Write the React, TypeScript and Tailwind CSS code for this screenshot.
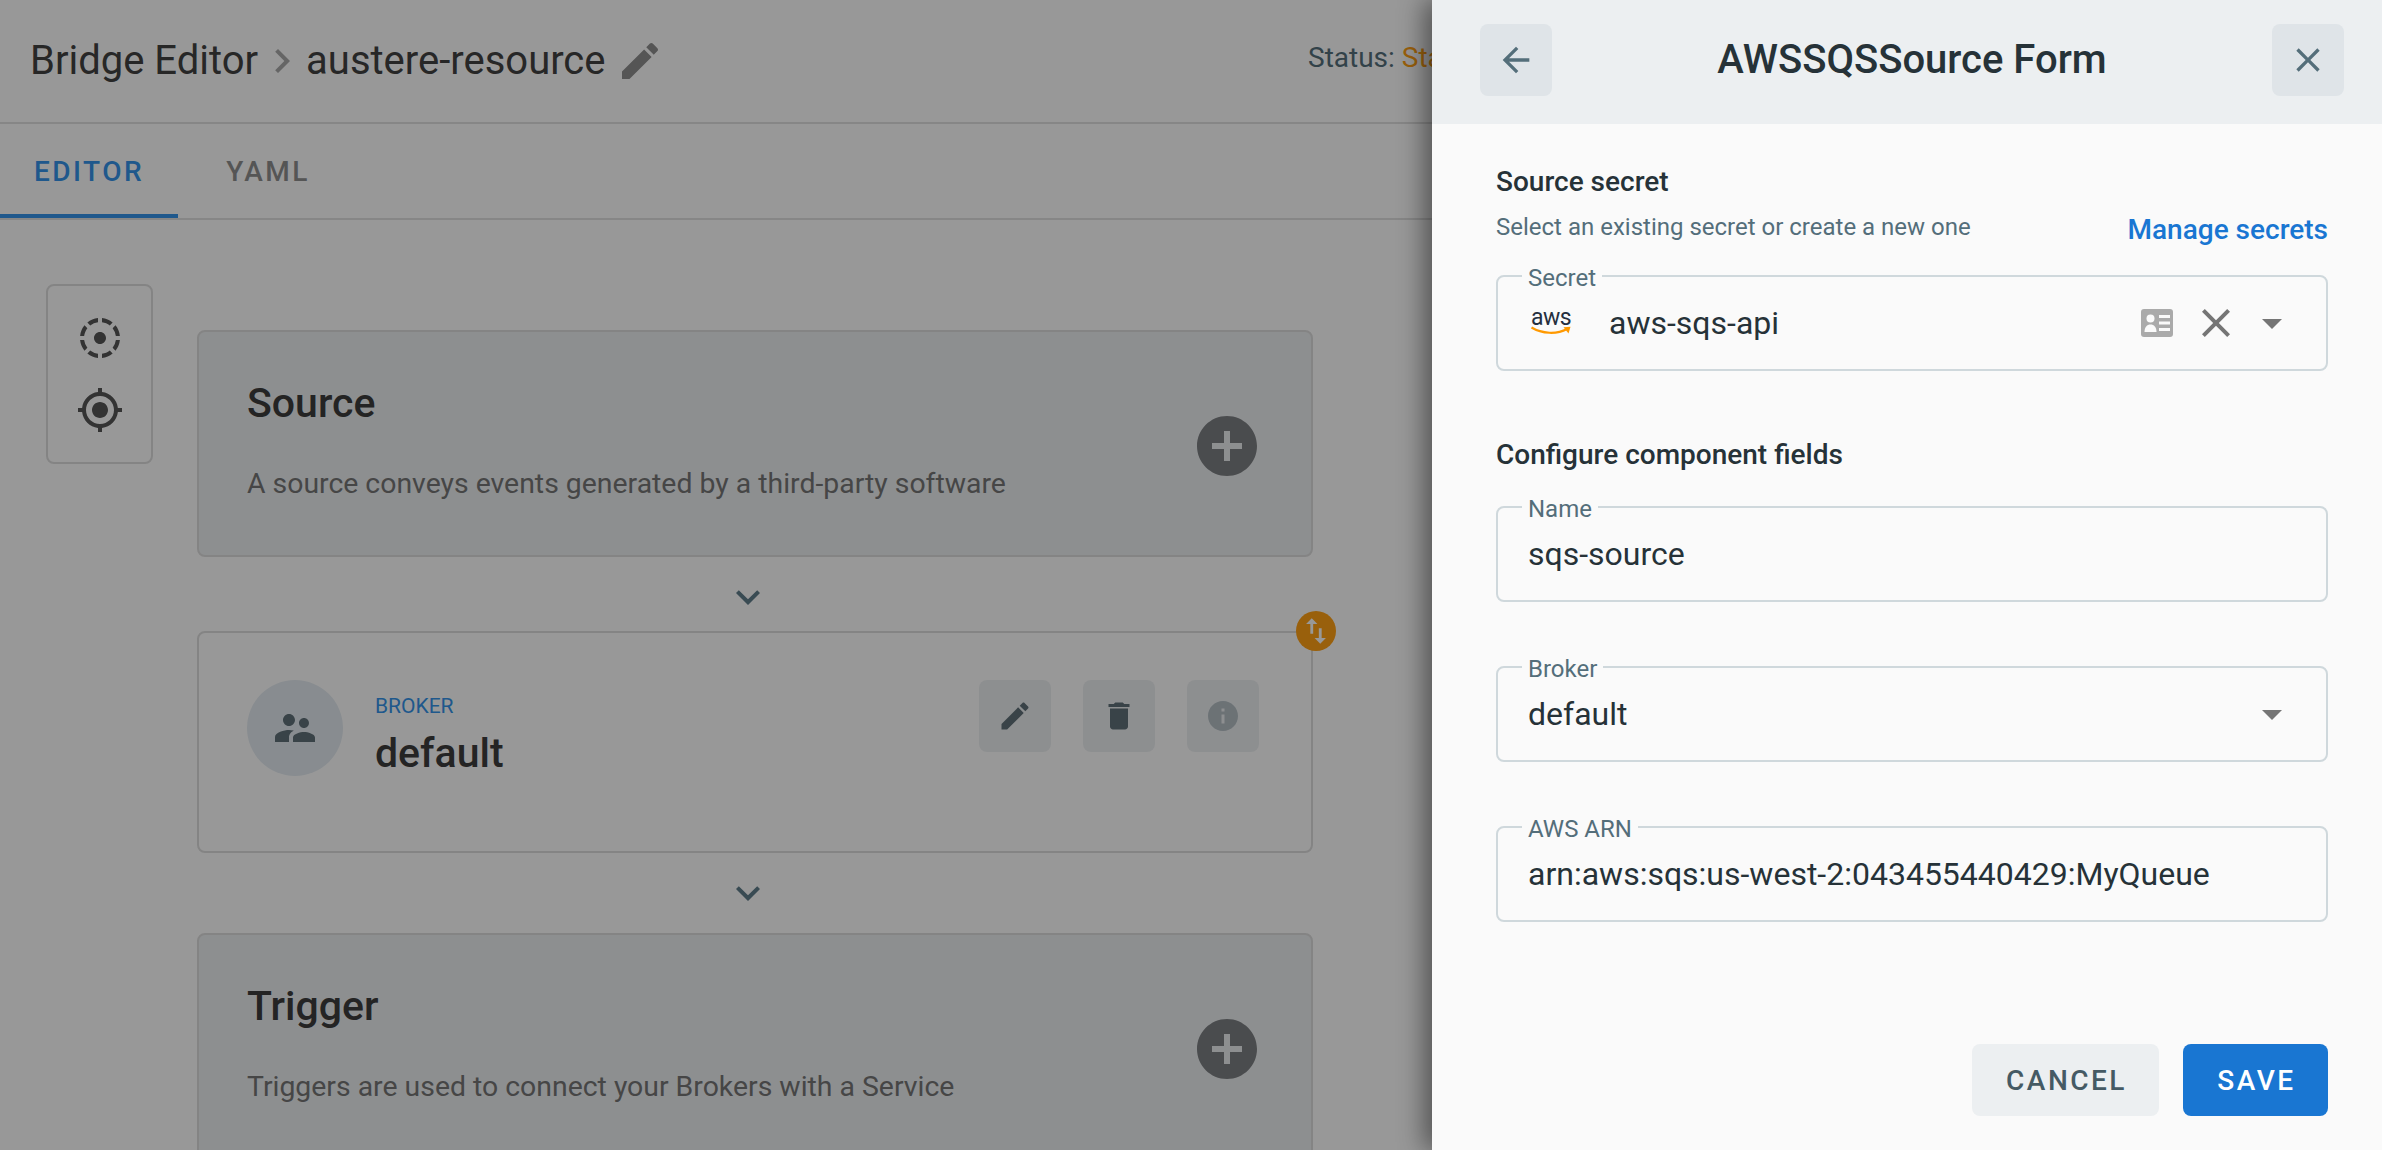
const P = {
  edit: "M3 17.25V21h3.75L17.81 9.94l-3.75-3.75L3 17.25zM20.71 7.04c.39-.39.39-1.02 0-1.41l-2.34-2.34c-.39-.39-1.02-.39-1.41 0l-1.83 1.83 3.75 3.75 1.83-1.83z",
  del: "M6 19c0 1.1.9 2 2 2h8c1.1 0 2-.9 2-2V7H6v12zM19 4h-3.5l-1-1h-5l-1 1H5v2h14V4z",
  info: "M12 2C6.48 2 2 6.48 2 12s4.48 10 10 10 10-4.48 10-10S17.52 2 12 2zm1 15h-2v-6h2v6zm0-8h-2V7h2v2z",
  add: "M12 2C6.48 2 2 6.48 2 12s4.48 10 10 10 10-4.48 10-10S17.52 2 12 2zm5 11h-4v4h-2v-4H7v-2h4V7h2v4h4v2z",
  back: "M20 11H7.83l5.59-5.59L12 4l-8 8 8 8 1.41-1.41L7.83 13H20v-2z",
  close: "M19 6.41L17.59 5 12 10.59 6.41 5 5 6.41 10.59 12 5 17.59 6.41 19 12 13.41 17.59 19 19 17.59 13.41 12 19 6.41z",
  drop: "M7 10l5 5 5-5z",
  down: "M7.41 8.59L12 13.17l4.59-4.58L18 10l-6 6-6-6 1.41-1.41z",
  right: "M10 6L8.59 7.41 13.17 12l-4.58 4.59L10 18l6-6z",
  sup: "M16.5 12c1.38 0 2.49-1.12 2.49-2.5S17.88 7 16.5 7C15.12 7 14 8.12 14 9.5s1.12 2.5 2.5 2.5zM9 11c1.66 0 2.99-1.34 2.99-3S10.66 5 9 5C7.34 5 6 6.34 6 8s1.34 3 3 3zm7.5 3c-1.83 0-5.5.92-5.5 2.75V19h11v-2.25c0-1.83-3.67-2.75-5.5-2.75zM9 13c-2.33 0-7 1.17-7 3.5V19h7v-2.25c0-.85.33-2.34 2.37-3.47C10.5 13.1 9.66 13 9 13z",
  swap: "M16 17.01V10h-2v7.01h-3L15 21l4-3.99h-3zM9 3L5 6.99h3V14h2V6.99h3L9 3z",
  gps: "M12 8c-2.21 0-4 1.79-4 4s1.79 4 4 4 4-1.79 4-4-1.79-4-4-4zm8.94 3c-.46-4.17-3.77-7.48-7.94-7.94V1h-2v2.06C6.83 3.52 3.52 6.83 3.06 11H1v2h2.06c.46 4.17 3.77 7.48 7.94 7.94V23h2v-2.06c4.17-.46 7.48-3.77 7.94-7.94H23v-2h-2.06zM12 19c-3.87 0-7-3.13-7-7s3.13-7 7-7 7 3.13 7 7-3.13 7-7 7z",
  tilt: "M11 4.07V2.05c-2.01.2-3.84 1-5.32 2.21L7.1 5.69A7.941 7.941 0 0 1 11 4.07zm7.32.19A9.949 9.949 0 0 0 13 2.05v2.02c1.46.18 2.79.76 3.9 1.62l1.42-1.43zM19.93 11h2.02c-.2-2.01-1-3.84-2.21-5.32L18.31 7.1a7.941 7.941 0 0 1 1.62 3.9zM5.69 7.1 4.26 5.68A9.949 9.949 0 0 0 2.05 11h2.02c.18-1.46.76-2.79 1.62-3.9zM4.07 13H2.05c.2 2.01 1 3.84 2.21 5.32l1.43-1.43A7.868 7.868 0 0 1 4.07 13zM15 12c0-1.66-1.34-3-3-3s-3 1.34-3 3 1.34 3 3 3 3-1.34 3-3zm3.31 4.9 1.43 1.43a9.981 9.981 0 0 0 2.21-5.32h-2.02a7.945 7.945 0 0 1-1.62 3.89zM13 19.93v2.02c2.01-.2 3.84-1 5.32-2.21l-1.43-1.43c-1.1.86-2.43 1.44-3.89 1.62zm-7.32-.19A9.981 9.981 0 0 0 11 21.95v-2.02a7.945 7.945 0 0 1-3.9-1.62l-1.42 1.43z",
};

function Icon({ d, className }: { d: string; className: string }) {
  return (
    <svg viewBox="0 0 24 24" fill="currentColor" className={className}>
      <path d={d} />
    </svg>
  );
}

function EmptyCard({ title, text }: { title: string; text: string }) {
  return (
    <div className="h-[227px] w-[1116px] shrink-0 rounded-lg border-2 border-[#dcdcdc] bg-[#eceff1] px-[48px] flex items-center justify-between">
      <div className="flex flex-col">
        <div className="text-[41px] leading-[48px] font-medium text-[#3c3c3c] mt-[-6px]">{title}</div>
        <div className="text-[28.4px] leading-[36px] text-[#757575] mt-[39px]">{text}</div>
      </div>
      <Icon d={P.add} className="w-[72px] h-[72px] text-[#7c7f82] mt-[4px]" />
    </div>
  );
}

function Arrow({ h }: { h: string }) {
  return (
    <div className={`${h} w-[1116px] shrink-0 flex items-start justify-center pt-[16px] pr-[14px]`}>
      <Icon d={P.down} className="w-[48px] h-[48px] text-[#607d8b]" />
    </div>
  );
}

function ActionBtn({ d, iconClass }: { d: string; iconClass: string }) {
  return (
    <div className="w-[72px] h-[72px] rounded-lg bg-[#eceff1] flex items-center justify-center">
      <Icon d={d} className={iconClass} />
    </div>
  );
}

function Field({ label, children, className }: { label: string; children: React.ReactNode; className?: string }) {
  return (
    <div className={`relative h-[96px] rounded-lg border-2 border-[#cfd8dc] flex items-center pl-[30px] pr-[32px] ${className ?? ""}`}>
      <span className="absolute left-[24px] top-[-11px] bg-[#fafafa] px-[6px] text-[24px] leading-[24px] text-[#546e7a]">{label}</span>
      {children}
    </div>
  );
}

function AwsLogo() {
  return (
    <div className="w-[40px] ml-[3px] mt-[-2px] flex flex-col items-center">
      <span className="text-[23px] leading-[18px] text-[#252f3e] tracking-[-0.5px]">aws</span>
      <svg viewBox="0 0 40 9" className="w-[40px] h-[9px] mt-[-1px]" fill="none">
        <path d="M0.5 1.5C11 8 26 8.5 36 3" stroke="#ff9900" strokeWidth="2.2" />
        <path d="M32.5 1.2L39.5 0.8L37.5 7.5Z" fill="#ff9900" />
      </svg>
    </div>
  );
}

export default function App() {
  return (
    <div className="relative w-[2382px] h-[1150px] overflow-hidden bg-[#fefefe] font-['Roboto',sans-serif] text-[#263238]">
      {/* underlying page */}
      <header className="h-[124px] border-b-2 border-[#e0e0e0] flex items-center pl-[30px] pr-[40px] justify-between">
        <div className="flex items-center text-[40px] text-[#424242]">
          <span>Bridge Editor</span>
          <Icon d={P.right} className="w-[48px] h-[48px] text-[#a8a8a8]" />
          <span>austere-resource</span>
          <Icon d={P.edit} className="w-[48px] h-[48px] text-[#8e8e8e] ml-[10px]" />
        </div>
        <div className="absolute left-[1308px] top-[43px] text-[28px] leading-[30px] text-[#546e7a] whitespace-nowrap">
          Status: <span className="text-[#ffa015]">Starting</span>
        </div>
      </header>
      <nav className="h-[96px] border-b-2 border-[#e0e0e0] flex text-[28px] font-medium tracking-[2.5px]">
        <div className="relative w-[178px] h-[94px] flex items-center justify-center text-[#3593e9] pt-[2px]">
          EDITOR
          <span className="absolute left-0 right-0 bottom-0 h-[4px] bg-[#3593e9]" />
        </div>
        <div className="w-[178px] h-[94px] flex items-center justify-center text-[#8e8e8e] pt-[2px] pl-[2px]">YAML</div>
      </nav>
      <main className="flex items-start pl-[46px] pt-[64px]">
        <div className="w-[107px] h-[180px] rounded-lg border-2 border-[#dcdcdc] flex flex-col items-center pt-[28px] gap-[24px] shrink-0">
          <Icon d={P.tilt} className="w-[48px] h-[48px] text-[#555555]" />
          <Icon d={P.gps} className="w-[48px] h-[48px] text-[#555555]" />
        </div>
        <div className="flex flex-col ml-[44px] mt-[46px]">
          <EmptyCard title="Source" text="A source conveys events generated by a third-party software" />
          <Arrow h="h-[74px]" />
          <div className="relative w-[1116px] h-[222px] shrink-0 rounded-lg border-2 border-[#dcdcdc] pl-[48px] pr-[52px] pt-[47px] flex items-start">
            <div className="w-[96px] h-[96px] rounded-full bg-[#e3eaf0] flex items-center justify-center shrink-0">
              <Icon d={P.sup} className="w-[48px] h-[48px] text-[#607078]" />
            </div>
            <div className="ml-[32px] flex flex-col">
              <span className="text-[21px] leading-[24px] text-[#3593e9] mt-[14px]">BROKER</span>
              <span className="text-[41px] leading-[48px] font-medium text-[#3c3c3c] mt-[11px]">default</span>
            </div>
            <div className="ml-auto flex gap-[32px]">
              <ActionBtn d={P.edit} iconClass="w-[36px] h-[36px] text-[#607078]" />
              <ActionBtn d={P.del} iconClass="w-[36px] h-[36px] text-[#607078]" />
              <ActionBtn d={P.info} iconClass="w-[36px] h-[36px] text-[#b4bec4]" />
            </div>
            <div className="absolute right-[-25px] top-[-22px] w-[40px] h-[40px] rounded-full bg-[#ffa015] flex items-center justify-center">
              <Icon d={P.swap} className="w-[34px] h-[34px] text-[#fefefe]" />
            </div>
          </div>
          <Arrow h="h-[80px]" />
          <EmptyCard title="Trigger" text="Triggers are used to connect your Brokers with a Service" />
        </div>
      </main>

      {/* scrim */}
      <div className="absolute inset-0 bg-black/40" />

      {/* drawer */}
      <aside className="absolute top-0 right-0 bottom-0 w-[950px] bg-[#fafafa] shadow-[-8px_0_24px_rgba(0,0,0,0.45)] flex flex-col">
        <div className="h-[124px] shrink-0 bg-[#eceff1] flex items-center justify-between pl-[48px] pr-[38px] pb-[4px]">
          <div className="w-[72px] h-[72px] rounded-lg bg-[#dfe4e8] flex items-center justify-center">
            <Icon d={P.back} className="w-[40px] h-[40px] text-[#546e7a]" />
          </div>
          <div className="text-[40px] font-medium text-[#263238]">AWSSQSSource Form</div>
          <div className="w-[72px] h-[72px] rounded-lg bg-[#dfe4e8] flex items-center justify-center">
            <Icon d={P.close} className="w-[40px] h-[40px] text-[#546e7a]" />
          </div>
        </div>
        <div className="flex-1 flex flex-col pl-[64px] pr-[54px] pt-[41px] pb-[34px]">
          <div className="text-[28px] leading-[34px] font-medium text-[#263238]">Source secret</div>
          <div className="flex items-center justify-between mt-[7px]">
            <span className="text-[24px] leading-[34px] text-[#546e7a]">Select an existing secret or create a new one</span>
            <span className="text-[28px] leading-[36px] font-medium text-[#1976d2] mt-[6px]">Manage secrets</span>
          </div>
          <Field label="Secret" className="mt-[27px]">
            <AwsLogo />
            <span className="ml-[38px] text-[32px] text-[#263238]">aws-sqs-api</span>
            <div className="ml-auto flex items-center">
              <svg viewBox="0 0 32 28" className="w-[32px] h-[28px]">
                <rect width="32" height="28" rx="3" fill="#aaaaaa" />
                <circle cx="9.5" cy="9.5" r="4" fill="#fafafa" />
                <path d="M3.500 23c0-5 2.500-7.500 6-7.500s6 2.500 6 7.500z" fill="#fafafa" />
                <path d="M18 6h11v3H18zM18 12.500h11v3H18zM18 19h11v3H18z" fill="#fafafa" />
              </svg>
              <Icon d={P.close} className="w-[48px] h-[48px] text-[#757575] ml-[19px]" />
              <Icon d={P.drop} className="w-[48px] h-[48px] text-[#757575] ml-[8px] mr-[-2px]" />
            </div>
          </Field>
          <div className="mt-[67px] text-[28px] leading-[34px] font-medium text-[#263238]">Configure component fields</div>
          <Field label="Name" className="mt-[34px]">
            <span className="text-[32px] text-[#263238]">sqs-source</span>
          </Field>
          <Field label="Broker" className="mt-[64px]">
            <span className="text-[32px] text-[#263238]">default</span>
            <Icon d={P.drop} className="w-[48px] h-[48px] text-[#757575] ml-auto mr-[-2px]" />
          </Field>
          <Field label="AWS ARN" className="mt-[64px]">
            <span className="text-[32px] text-[#263238]">arn:aws:sqs:us-west-2:043455440429:MyQueue</span>
          </Field>
          <div className="mt-auto flex justify-end gap-[24px]">
            <div className="w-[187px] h-[72px] rounded-lg bg-[#eceff1] flex items-center justify-center text-[28px] font-medium tracking-[2.5px] text-[#455a64] pt-[2px] pl-[2px]">CANCEL</div>
            <div className="w-[145px] h-[72px] rounded-lg bg-[#1976d2] flex items-center justify-center text-[28px] font-medium tracking-[2.5px] text-white pt-[2px] pl-[2px]">SAVE</div>
          </div>
        </div>
      </aside>
    </div>
  );
}
